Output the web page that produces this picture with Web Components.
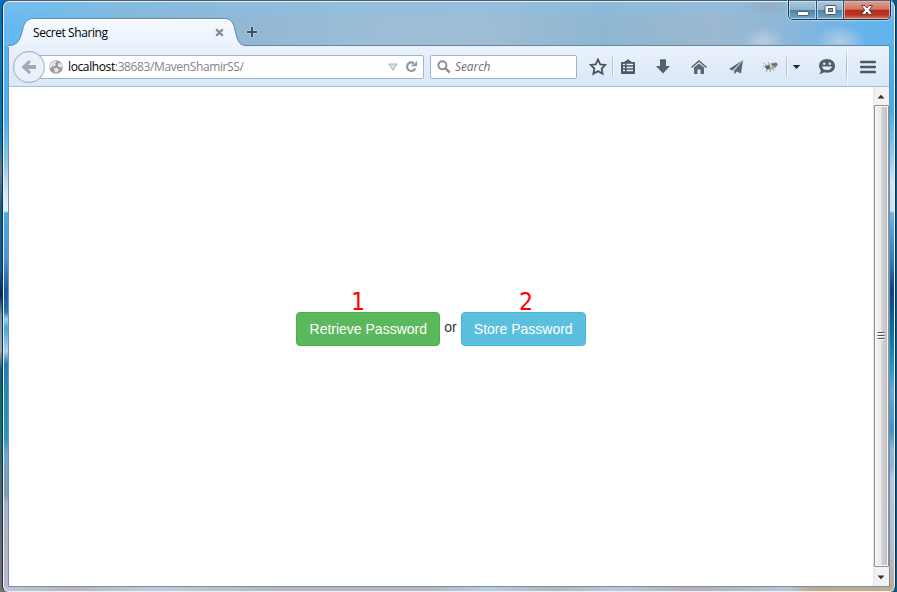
<!DOCTYPE html>
<html lang="en">
<head>
<meta charset="utf-8">
<title>Secret Sharing</title>
<style>
html,body{margin:0;height:100%;overflow:hidden}
body{background:linear-gradient(90deg,transparent 50%,#082c50 50%,#065a84 100%),linear-gradient(#0070bd 0,#0872ac 140px,#647989 172px,#175b89 205px,#075b92 270px,#052855 295px,#6e91aa 315px,#a4a3ad 350px,#125a7a 370px,#156c78 430px,#52636d 500px,#777074 592px)}
</style>
</head>
<body>
<script>
const define = (name, html) => customElements.define(name, class extends HTMLElement {
  constructor() { super(); this.attachShadow({mode: 'open'}).innerHTML = html; }
});

define('tool-icon', `<style>:host{display:flex;align-items:center;justify-content:center;flex:none;width:var(--w,28px);height:100%}</style><slot></slot>`);

define('tool-rule', `<style>:host{display:block;flex:none;width:1px;height:var(--h,20px);background:var(--rule,#b3c7da);box-shadow:1px 0 #f4f9fe}</style>`);

define('caption-buttons', `<style>
:host{position:absolute;right:4px;top:-1px;display:flex;width:103px;height:20px;box-sizing:border-box;border:1px solid #203448;border-top-color:#46637c;border-radius:0 0 5px 5px;overflow:hidden;box-shadow:0 0 1px 1px #cfe6f899}
span{display:flex;align-items:center;justify-content:center;box-sizing:border-box;box-shadow:inset 0 0 0 1px #d4e7f5bb;background:linear-gradient(#a9c9df 0,#8fb3cd 48%,#4e7fa4 50%,#6ea8cb 100%)}
.a{width:28px;border-right:1px solid #36526a}.b{width:27px;border-right:1px solid #36526a}
.c{width:46px;background:linear-gradient(#df9d8e 0,#cf7867 46%,#b32b18 50%,#b83722 78%,#d8856b 100%);box-shadow:inset 0 0 0 1px #f0b8a9bb}
</style>
<span class="a"><svg width="14" height="18"><rect x="1.500" y="10.500" width="11" height="4" rx=".7" fill="#fff" stroke="#52616e"/></svg></span>
<span class="b"><svg width="13" height="18"><rect x="1" y="4.500" width="11" height="9" rx=".7" fill="#fff" stroke="#4d5b69"/><rect x="4.500" y="7.500" width="4" height="3" fill="#7fa9c6" stroke="#4d5b69"/></svg></span>
<span class="c"><svg width="14" height="18"><path d="M1.500 4.500H5L7 7 9 4.500H12.500L9.300 9 12.500 13.500H9L7 11 5 13.500H1.500L4.700 9Z" fill="#fff" stroke="#5d4448"/></svg></span>`);

define('browser-tab', `<style>
:host{position:relative;display:flex;width:238px;height:28px;align-items:center;box-sizing:border-box;padding:0 22px 0 25px;justify-content:space-between;font:12px "Open Sans","Noto Sans",sans-serif;letter-spacing:-.43px;color:#000}
.bg{position:absolute;left:0;top:0}
.t{position:relative;white-space:nowrap}.x{position:relative}
</style>
<svg class="bg" width="239" height="29"><defs><linearGradient id="g" x2="0" y2="1"><stop stop-color="#f6faff"/><stop offset="1" stop-color="#e9f2fc"/></linearGradient></defs>
<path d="M0 29V28C10 28 12 22 14.500 12C16.500 4 19 .5 27 .5H215C223 .5 225 4 227 12C229.500 23 231 27.500 238 27.500V29Z" fill="url(#g)"/>
<path d="M0 27.500C10 27.500 12 22 14.500 12C16.500 4 19 .5 27 .5H215C223 .5 225 4 227 12C229.500 23 231 27.500 238 27.500" fill="none" stroke="#5f8cad"/>
<path d="M17 10C19 3 21 1.500 27 1.500H215C221 1.500 223 3 225 10" fill="none" stroke="#fff"/></svg>
<span class="t"><slot></slot></span>
<svg class="x" width="9" height="9"><path d="M1.200 1.200L7.800 7.800M7.800 1.200L1.200 7.800" stroke="#7c8b98" stroke-width="2.300"/></svg>`);

define('tab-strip', `<style>
:host{display:flex;position:relative;height:45px;box-sizing:border-box;padding:17px 0 0 0;flex:none}
:host::after{content:"";position:absolute;left:237px;right:0;bottom:0;height:1px;background:#5c89a9}
.plus{margin:8px 0 0 0}
</style><slot></slot><svg class="plus" width="14" height="14"><path d="M6 .5V11.500M.5 6H11.500" stroke="#dce8f1" stroke-width="3.600" opacity=".45"/><path d="M6 1V11M1 6H11" stroke="#40515f" stroke-width="2"/></svg>`);

define('url-bar', `<style>
:host{display:flex;align-items:center;flex:none;width:385px;height:24px;box-sizing:border-box;margin-left:-6px;padding:0 5px 0 9px;background:#fff;border:1px solid #9fb6cd;border-radius:0 2px 2px 0;font:12px "Open Sans","Noto Sans",sans-serif;color:#848484}
.t{white-space:nowrap;margin-left:5px;flex:1;letter-spacing:-.38px;position:relative}b{font-weight:400;color:#000}
.d{margin-right:7px}
</style>
<svg width="14" height="14"><circle cx="7" cy="7" r="6.800" fill="#9b9b9b"/><path d="M1 4.500L3.500 1.700 7 .8 7.800 2 6 3.300 7 4.500 5.300 6.500 3.300 6.200 1.600 8.500.5 8ZM9 4L11 2.500 13 5 13.200 8 11 7 9 7ZM5 8L8 8 10 9.500 9 11.500 7 13 5.500 11.500Z" fill="#e4e4e4"/></svg>
<span class="t"><b>localhost</b>:38683/MavenShamirSS/</span>
<svg class="d" width="10" height="8"><path d="M.8 1H9.200L5 7.200Z" fill="#d8e0e8" stroke="#a9b2bc"/></svg>
<svg width="13" height="13"><path d="M9 3.300A4.300 4.300 0 1 0 10.200 8.600" fill="none" stroke="#8b99a7" stroke-width="2.200"/><path d="M12 .8V6.200H6.600V4.600H8.800Z" fill="#8b99a7"/></svg>`);

define('search-box', `<style>
:host{display:flex;align-items:center;flex:none;width:147px;height:24px;box-sizing:border-box;margin-left:6px;padding-left:6px;background:#fff;border:1px solid #9fb6cd;border-radius:2px;font:italic 12px "Open Sans","Noto Sans",sans-serif;color:#6d6d6d}
span{margin-left:4px;letter-spacing:-.1px}
</style><svg width="14" height="14"><circle cx="5.400" cy="5.200" r="4" fill="none" stroke="#8f8f8f" stroke-width="2"/><path d="M8.300 8.200L12.800 12.600" stroke="#929292" stroke-width="2.600"/></svg><span><slot></slot></span>`);

define('nav-bar', `<style>
:host{display:flex;align-items:center;flex:none;height:42px;margin-bottom:-1px;box-sizing:border-box;padding:0 0 1px 4px;background:linear-gradient(#eaf2fc,#d9e7f8 40px,#a5bdd5 40px,#a5bdd5 41px,#fff 41px)}
.back{display:flex;position:relative;z-index:1;flex:none}
</style>
<svg class="back" width="32" height="32"><circle cx="16" cy="16" r="15.400" fill="#e9f1fb" stroke="#a8b7c8" stroke-width="1.100"/><path d="M8.500 16L16 9L18 11L15 14H23V18H15L18 21L16 23Z" fill="#a0aab5"/></svg>
<url-bar></url-bar><search-box>Search</search-box>
<tool-icon style="--w:28px;margin-left:7px"><svg width="18" height="18"><path d="M9 1.500L11.200 6.300 16.400 6.900 12.600 10.500 13.600 15.800 9 13.100 4.400 15.800 5.400 10.500 1.600 6.900 6.800 6.300Z" fill="#edf4fc" stroke="#48545f" stroke-width="1.800"/></svg></tool-icon>
<tool-rule></tool-rule>
<tool-icon style="--w:29px"><svg width="16" height="16"><path d="M1 3.500Q1 3 1.500 3H4.500L5 2H6L8 0 10 2H11L11.500 3H14.500Q15 3 15 3.500V14Q15 15 14 15H2Q1 15 1 14Z" fill="#4b5965"/><path d="M3 5.500H5M6.500 5.500H13M3 8.500H5M6.500 8.500H13M3 11.500H5M6.500 11.500H13" stroke="#e8f1fb" stroke-width="1.500"/></svg></tool-icon>
<tool-icon style="--w:36px;margin-left:3px"><svg width="16" height="16"><path d="M5 1H11V7H15L8 14.500 1 7H5Z" fill="#56636e"/><path d="M5 1H11" stroke="#35424d"/></svg></tool-icon>
<tool-icon style="--w:36px"><svg width="18" height="16"><path d="M1.500 8.500L9 2 16.500 8.500" fill="none" stroke="#55626d" stroke-width="1.600"/><path d="M4 8.500L9 4.500 14 8.500V15H10.500V10.500H7.500V15H4Z" fill="#5a6771"/></svg></tool-icon>
<tool-icon style="--w:37px"><svg width="16" height="16"><path d="M15 1L1 10 4.500 11.500ZM15 1L6 11.800 6.500 15.500 8.600 12.500 13 14.500Z" fill="#596874"/><path d="M14 2L5.500 12" stroke="#cedae5" stroke-width=".7"/></svg></tool-icon>
<tool-icon style="--w:32px"><svg width="17" height="14"><path d="M2 3L5 6M1 6L5 7M4 12L6 8M8 12L9 8M12 11L10 7M14 8L11 6M6 2L8 5" stroke="#8a8a8c" stroke-width=".8"/><ellipse cx="9" cy="6.500" rx="5.800" ry="3" transform="rotate(-18 9 6.500)" fill="#a5a5a3"/><path d="M3 6.500L7 5 8 8 5 9.500ZM10 3L11.500 3.500 12 6 9.500 5.500Z" fill="#5f6162"/><circle cx="13.500" cy="4.500" r="2" fill="#75716e"/><path d="M8 4L10.500 5.500 8.500 7.500" fill="#eee"/></svg></tool-icon>
<tool-rule></tool-rule>
<tool-icon style="--w:19px"><svg width="9" height="6"><path d="M.8 1H8.200L4.500 5Z" fill="#20272e"/></svg></tool-icon>
<tool-icon style="--w:40px"><svg width="18" height="17" style="margin-left:2px"><path d="M9 1C14 1 17 3.900 17 8S14 14.700 9 14.700Q7.500 14.700 6 14.300Q4 16 1.200 15.800Q2.800 14.300 2.900 12.500Q1 10.700 1 8C1 3.900 4 1 9 1Z" fill="#53606b"/><circle cx="6.200" cy="5.800" r="1.200" fill="#e7f0fa"/><circle cx="11.800" cy="5.800" r="1.200" fill="#e7f0fa"/><path d="M4 8.500H14C13.300 10.900 11.800 12 9 12S4.700 10.900 4 8.500Z" fill="#e7f0fa"/></svg></tool-icon>
<tool-rule style="--h:36px;--rule:linear-gradient(#dbe6f2,#9fb4c9,#dbe6f2)"></tool-rule>
<tool-icon style="--w:42px"><svg width="16" height="14"><path d="M1.300 2H14.700M1.300 7H14.700M1.300 12H14.700" stroke="#4b5863" stroke-width="2.700" stroke-linecap="round"/></svg></tool-icon>`);

define('scroll-bar', `<style>
:host{display:flex;flex-direction:column;width:16px;flex:none;background:linear-gradient(90deg,#e6e6e6,#f2f2f2 3px,#f2f2f2);align-items:center}
.b{height:18px;flex:none;display:flex;align-items:center;justify-content:center}
.th{flex:1;width:15px;box-sizing:border-box;border:1px solid #8f8f8f;border-radius:1px;box-shadow:inset 0 0 0 1px #f8f8f8;background:linear-gradient(90deg,#f5f5f5 0,#e9e9e9 45%,#d1d1d4 55%,#bebec2 100%);display:flex;align-items:center;justify-content:center}
</style>
<div class="b"><svg width="8" height="5"><path d="M.5 4.500L4 .8 7.500 4.500Z" fill="#333"/></svg></div>
<div class="th"><svg width="8" height="9"><path d="M.5 1.500H7.500M.5 4.500H7.500M.5 7.500H7.500" stroke="#fff"/><path d="M.5 .5H7.500M.5 3.500H7.500M.5 6.500H7.500" stroke="#555" stroke-width="1.200"/></svg></div>
<div class="b" style="height:19px;padding-top:2px;box-sizing:border-box"><svg width="8" height="5"><path d="M.5 .5L4 4.200 7.500 .5Z" fill="#333"/></svg></div>`);

define('action-button', `<style>
:host{position:relative;display:block;box-sizing:border-box;height:34px;width:var(--w);border:1px solid var(--edge);border-radius:4px;background:var(--fill);color:#fff;font:14px/32px "Liberation Sans",Arial,sans-serif;text-align:center;white-space:nowrap}
.n{position:absolute;left:var(--nx);top:-25px;color:#f00;font:24px/28px "DejaVu Sans",Verdana,sans-serif;transform:scaleX(.92);transform-origin:0 0}
</style><span class="n"><slot name="mark"></slot></span><slot></slot>`);

define('page-view', `<style>
:host{display:flex;flex:1;background:#fff;min-height:0}
main{flex:1;display:flex;align-items:flex-start;justify-content:center;padding-top:225px;font:14px/20px "Liberation Sans",Arial,sans-serif;color:#333}
.or{margin:5px 4px 0 4px}
</style><main>
<action-button style="--w:144px;--fill:#5cb85c;--edge:#4cae4c;--nx:54px"><span slot="mark">1</span>Retrieve Password</action-button>
<span class="or">or</span>
<action-button style="--w:125px;--fill:#5bc0de;--edge:#46b8da;--nx:57px"><span slot="mark">2</span>Store Password</action-button>
</main><scroll-bar></scroll-bar>`);

define('browser-window', `<style>
:host{display:block;position:relative;box-sizing:border-box;margin-left:2px;width:894px;height:592px;padding:0 6px 5px;border-top:1px solid #4e5a68;border-left:1px solid #1b3040;border-right:1px solid #1b3040;border-radius:7px 7px 6px 6px;box-shadow:inset 0 0 0 1px #e3f2fc;
background:
radial-gradient(ellipse 22px 14px at 760px 40px,#cbd2e0bb,transparent),
radial-gradient(ellipse 26px 16px at 837px 40px,#cbd2e0bb,transparent),
radial-gradient(ellipse 28px 8px at 765px 6px,#9ea1afaa,transparent),
linear-gradient(#86c2eb88 0,transparent 22px) 0 0/100% 45px no-repeat,
linear-gradient(90deg,#66b9f5 0,#6bb9ec 45px,#83b6da 120px,#91b7d3 230px,#9dbdd6 370px,#a0bdd4 480px,#8fb6d0 600px,#9cb8cf 710px,#8db7d8 780px,#65b4eb 860px,#62b3ee) 0 0/100% 45px no-repeat,
linear-gradient(90deg,#c3c5d4 0,#bcb4bd 70px,#c5cad7 150px,#bbb6c0 270px,#bbb6c0 430px,#bdcbdc 485px,#b9b3bd 550px,#bdc7d5 610px,#b7adb5 690px,#bdc4d0 785px,#c5a686 810px,#c6ab8c) 0 100%/100% 5px no-repeat,
linear-gradient(#55b4f0 0,#54afe8 120px,#8bc7eb 160px,#d2e7f4 190px,#e5f1f8 210px,#4bace5 212px,#5295cc 257px,#175b9c 290px,#2170b8 310px,#9bcef3 318px,#45a6df 327px,#add3f4 350px,#1b80b6 363px,#218fae 397px,#3090c0 437px,#70a8d0 453px,#849aaf 493px,#a9b4d0 503px,#b8b3bd 547px,#b9bdd0) 0 0/50% 100% no-repeat,
linear-gradient(#55b4f0 0,#45aee9 110px,#99d0f1 160px,#cde6f5 180px,#c9e4f5 210px,#6fb3e2 212px,#307cb9 260px,#153f7c 290px,#055a93 310px,#067da8 340px,#259ccc 370px,#68a8da 390px,#3c94c4 430px,#91b9df 450px,#8bb3d2 465px,#b2c7e5 475px,#b8bdd2 545px,#c4a98e 590px) 100% 0/50% 100% no-repeat}
.inner{display:flex;flex-direction:column;height:100%;box-sizing:border-box;margin:0 -1px}
.body{display:flex;flex-direction:column;flex:1;min-height:0;border:1px solid #6e91ac;border-top:0}
</style>
<caption-buttons></caption-buttons>
<div class="inner"><tab-strip><browser-tab>Secret Sharing</browser-tab></tab-strip>
<div class="body"><nav-bar></nav-bar><page-view></page-view></div></div>`);
</script>
<browser-window></browser-window>
</body>
</html>
